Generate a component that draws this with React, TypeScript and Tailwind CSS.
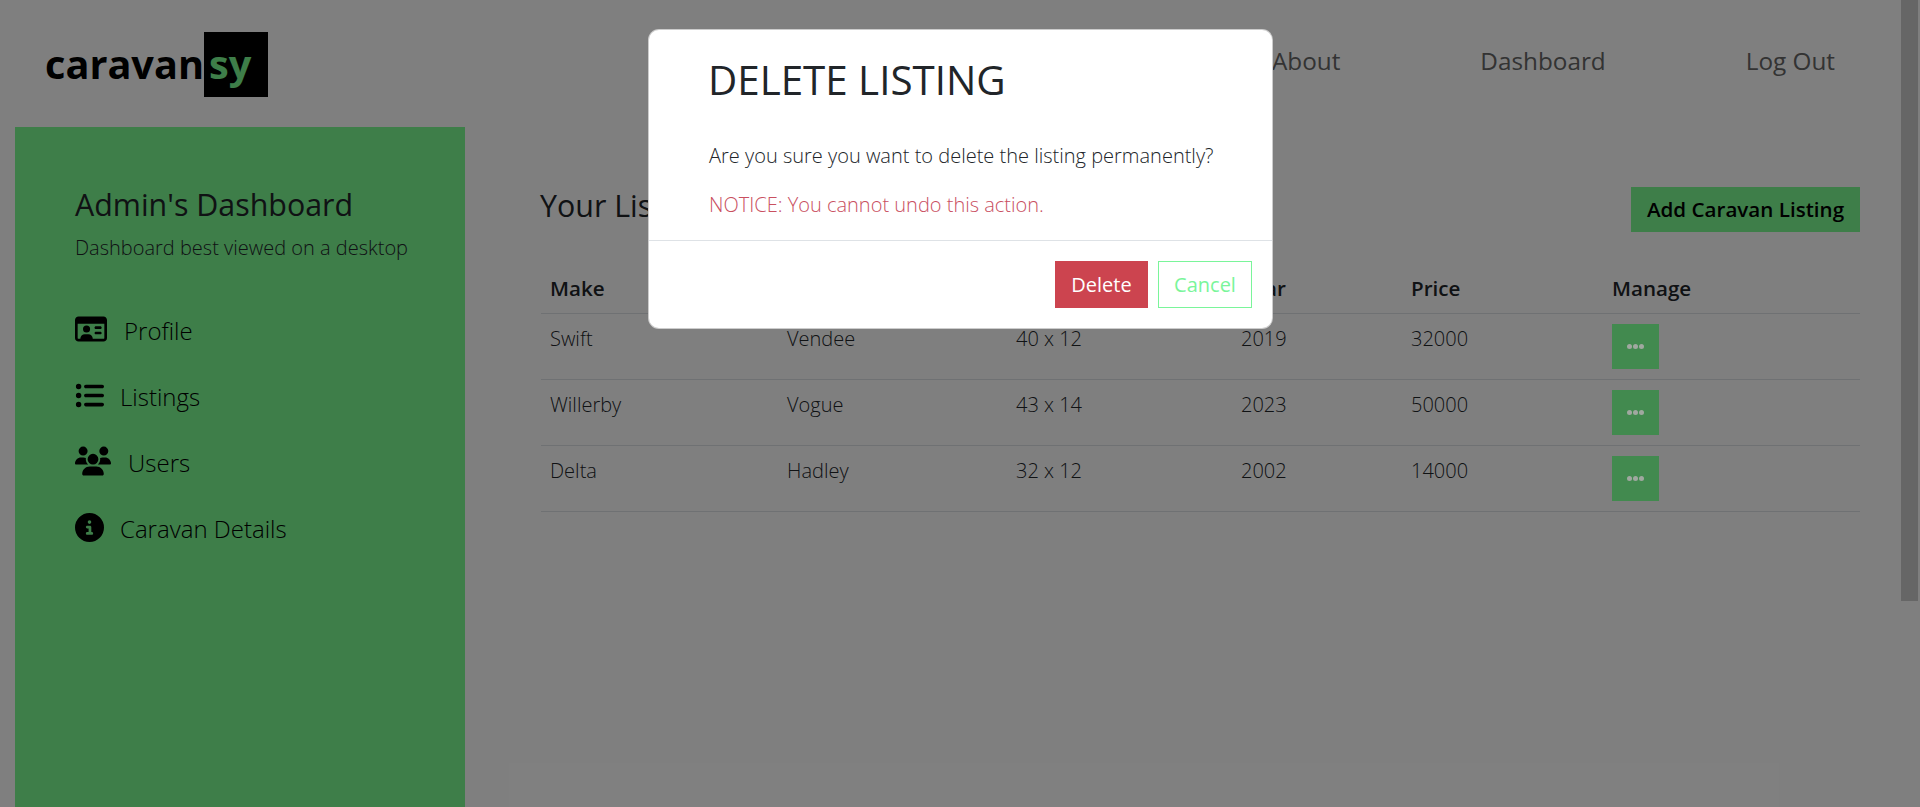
import React from 'react';
import { FaRegIdCard, FaListUl, FaUsers, FaCircleInfo } from 'react-icons/fa6';

const navItems = ['About', 'Dashboard', 'Log Out'];

const rows = [
  { make: 'Swift', model: 'Vendee', size: '40 x 12', year: '2019', price: '32000' },
  { make: 'Willerby', model: 'Vogue', size: '43 x 14', year: '2023', price: '50000' },
  { make: 'Delta', model: 'Hadley', size: '32 x 12', year: '2002', price: '14000' },
];

const cols = 'grid grid-cols-[237px_229px_225px_170px_201px_1fr] pl-[9px]';

function Sidebar() {
  return (
    <aside className="w-[450px] shrink-0 bg-[#7dfc93] pl-[60px] pt-[58px] text-black">
      <h2 className="text-[30.4px] leading-[40px] text-[#212529]">Admin's Dashboard</h2>
      <p className="mt-[8px] text-[20px] leading-[30px] font-light text-[#212529]">Dashboard best viewed on a desktop</p>
      <ul className="mt-[35px] text-[24px] font-light">
        <li className="flex h-[66px] items-center gap-[17px]">
          <FaRegIdCard size={32} className="-mt-[4px]" />
          <span>Profile</span>
        </li>
        <li className="flex h-[66px] items-center gap-[16px]">
          <FaListUl size={29} className="-mt-[4px]" />
          <span>Listings</span>
        </li>
        <li className="flex h-[66px] items-center gap-[17px]">
          <FaUsers size={36} className="-mt-[4px]" />
          <span>Users</span>
        </li>
        <li className="flex h-[66px] items-center gap-[16px]">
          <FaCircleInfo size={29} className="-mt-[4px]" />
          <span>Caravan Details</span>
        </li>
      </ul>
    </aside>
  );
}

function ListingsTable() {
  return (
    <div className="mt-[34px] ml-[1px] text-[#212529]">
      <div className={`${cols} h-[48px] items-center border-b border-[#dee2e6] pb-[3px] text-[20.6px] font-semibold`}>
        <span>Make</span>
        <span>Model</span>
        <span>Size</span>
        <span>Year</span>
        <span>Price</span>
        <span>Manage</span>
      </div>
      {rows.map((r) => (
        <div key={r.make} className={`${cols} h-[66px] border-b border-[#dee2e6] text-[20px] font-light`}>
          <span className="pt-[10px]">{r.make}</span>
          <span className="pt-[10px]">{r.model}</span>
          <span className="pt-[10px]">{r.size}</span>
          <span className="pt-[10px]">{r.year}</span>
          <span className="pt-[10px]">{r.price}</span>
          <div className="pt-[10px]">
            <div className="relative z-10 flex h-[45px] w-[47px] items-center justify-center gap-[1px] bg-[#428a4f]">
              <i className="size-[5px] rounded-full bg-[#a0a8a0]" />
              <i className="size-[5px] rounded-full bg-[#a0a8a0]" />
              <i className="size-[5px] rounded-full bg-[#a0a8a0]" />
            </div>
          </div>
        </div>
      ))}
    </div>
  );
}

function DeleteModal() {
  return (
    <div className="absolute left-[648px] top-[29px] z-20 w-[625px] rounded-[11px] border border-black/20 bg-white">
      <div className="h-[210px] pl-[60px] pt-[26px]">
        <h3 className="-ml-[1px] text-[40.3px] leading-[48px] text-[#212529]">DELETE LISTING</h3>
        <p className="mt-[37px] text-[20px] leading-[30px] font-light text-[#212529]">Are you sure you want to delete the listing permanently?</p>
        <p className="mt-[19px] text-[20px] leading-[30px] font-light text-[#c9505f]">NOTICE: You cannot undo this action.</p>
      </div>
      <div className="flex h-[88px] justify-end gap-[10px] border-t border-[#dee2e6] pr-[20px] pt-[20px]">
        <button className="h-[47px] w-[93px] bg-[#cc444f] text-[20px] text-white">Delete</button>
        <button className="h-[47px] w-[94px] border border-[#7af59a] bg-white text-[20px] text-[#7af59a]">Cancel</button>
      </div>
    </div>
  );
}

export default function App() {
  return (
    <div className="relative flex h-[807px] overflow-hidden bg-white font-['Open_Sans',sans-serif]">
      <div className="flex w-[1901px] flex-col">
        <header className="flex h-[127px] shrink-0">
          <div className="mt-[32px] ml-[45px] flex h-[65px] items-center text-[39.7px] leading-none font-bold text-black">
            <span>caravan</span>
            <span className="flex h-[65px] w-[64px] items-center bg-black pl-[5px] text-[#7dfc93]">sy</span>
          </div>
          <nav className="ml-auto mt-[43px] flex h-[36px] items-center gap-[140px] pr-[66px] text-[24.3px] text-[#666]">
            {navItems.map((n) => (
              <span key={n}>{n}</span>
            ))}
          </nav>
        </header>
        <div className="flex min-h-0 flex-1 pl-[15px]">
          <Sidebar />
          <main className="flex-1 pl-[75px] pr-[41px] pt-[60px]">
            <div className="flex h-[45px] items-center justify-between">
              <h2 className="mb-[8px] text-[30.4px] leading-[40px] text-[#212529]">Your Listings</h2>
              <button className="flex h-[45px] w-[229px] items-center justify-center bg-[#7dfc93] text-[20.6px] font-semibold text-black">Add Caravan Listing</button>
            </div>
            <ListingsTable />
          </main>
        </div>
      </div>
      <div className="w-[19px] shrink-0 bg-white">
        <div className="h-[601px] w-[17px] bg-[#cdcdcd]" />
      </div>
      <div className="absolute inset-0 bg-black/50" />
      <DeleteModal />
    </div>
  );
}
